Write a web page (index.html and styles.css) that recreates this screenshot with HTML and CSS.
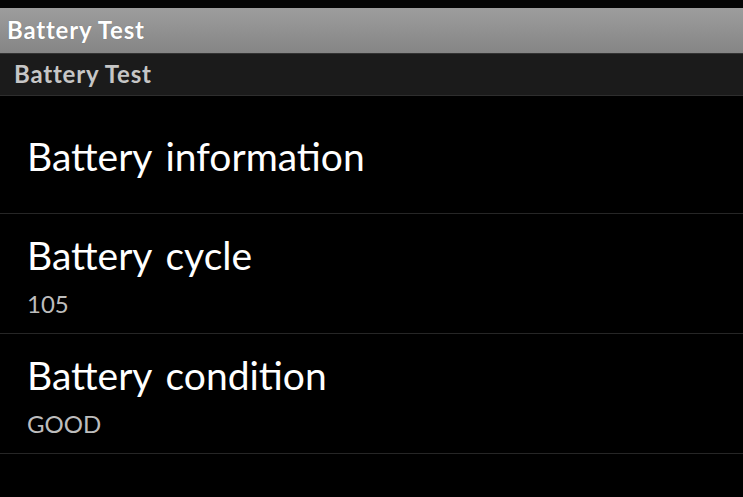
FILE: index.html
```html
<!DOCTYPE html>
<html>
<head>
<meta charset="utf-8">
<link rel="stylesheet" href="styles.css">
</head>
<body>
<div class="screen">
  <div class="status"></div>
  <header class="titlebar">Battery Test</header>
  <div class="subheader">Battery Test</div>
  <ul class="list">
    <li class="row row-single"><div class="row-title">Battery information</div></li>
    <li class="row"><div class="row-title">Battery cycle</div><div class="row-sub">105</div></li>
    <li class="row"><div class="row-title">Battery condition</div><div class="row-sub">GOOD</div></li>
  </ul>
</div>
</body>
</html>
```
FILE: styles.css
```css
html, body {
  margin: 0;
  padding: 0;
  background: #000;
}
body {
  font-family: Lato, "Open Sans", "DejaVu Sans", sans-serif;
  width: 743px;
  height: 497px;
  overflow: hidden;
}
.screen {
  display: flex;
  flex-direction: column;
}
.status {
  height: 8px;
  background: #050505;
}
.titlebar {
  height: 45px;
  box-sizing: border-box;
  padding: 8px 0 0 7px;
  font-size: 24px;
  font-weight: 700;
  letter-spacing: 0.8px;
  line-height: 27px;
  color: #fff;
  background: linear-gradient(#9d9d9d, #858585);
  text-shadow: 0 0 1px rgba(0,0,0,0.3);
}
.subheader {
  height: 43px;
  box-sizing: border-box;
  border-top: 1px solid #333;
  border-bottom: 1px solid #2e2e2e;
  background: #1b1b1b;
  padding: 7px 0 0 14px;
  font-size: 24px;
  font-weight: 700;
  letter-spacing: 0.8px;
  line-height: 26px;
  color: #c6c6c6;
}
.list {
  list-style: none;
  margin: 0;
  padding: 0;
}
.row {
  height: 120px;
  box-sizing: border-box;
  border-bottom: 1px solid #262626;
  padding: 19px 0 0 27px;
}
.row-single {
  height: 118px;
  padding-top: 38px;
}
.row-title {
  font-size: 39px;
  line-height: 44px;
  word-spacing: 4px;
  color: #fff;
}
.row-sub {
  margin-top: 13px;
  font-size: 24px;
  line-height: 28px;
  color: #bdbdbd;
}
```
